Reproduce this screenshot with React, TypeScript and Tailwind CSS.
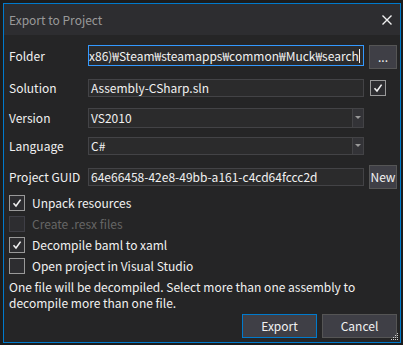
import React from 'react';

const font = { fontFamily: '"Noto Sans CJK KR", "Noto Sans", sans-serif' };

const Check: React.FC<{ checked?: boolean; disabled?: boolean }> = ({ checked, disabled }) => (
  <div
    className={
      disabled
        ? 'w-4 h-4 shrink-0 border border-[#3f3f46] bg-[#2d2d30]'
        : 'w-4 h-4 shrink-0 border border-[#999999] bg-[#2d2d30] flex items-center justify-center'
    }
  >
    {checked && (
      <svg width="10" height="10" viewBox="0 0 10 10">
        <path d="M1.5 5.2 L4 8 L8.6 1.6" fill="none" stroke="#f1f1f1" strokeWidth="1.6" />
      </svg>
    )}
  </div>
);

const Combo: React.FC<{ value: string; h: string }> = ({ value, h }) => (
  <div className={`flex w-[276px] ${h} border border-[#434346] bg-[#2b2b2c]`}>
    <div className="flex-1 flex items-center pl-[2px] text-[#f1f1f1]">{value}</div>
    <div className="w-[11px] border-l border-[#434346] bg-[#333337] flex items-center justify-center">
      <svg width="6" height="4" viewBox="0 0 6 4">
        <path d="M0 0 H6 L3 3 Z" fill="#999999" />
      </svg>
    </div>
  </div>
);

export default function App() {
  return (
    <div className="w-[403px] h-[345px] bg-[#1c1c1c] p-[3px] text-[12px] leading-[16px]" style={font}>
      <div className="w-[398px] h-[340px] border border-[#007acc] bg-[#252526] flex flex-col">
        {/* Title */}
        <div className="h-[31px] shrink-0 bg-[#2d2d30] flex items-center justify-between pl-[5px] pr-[8px]">
          <span className="text-[12px] text-[#999999]">Export to Project</span>
          <svg width="10" height="10" viewBox="0 0 10 10">
            <path d="M0.5 0.5 L9.5 9.5 M9.5 0.5 L0.5 9.5" stroke="#f1f1f1" strokeWidth="1.4" />
          </svg>
        </div>

        <div className="flex flex-col pl-[5px] pr-[2px] text-[#f1f1f1]">
          {/* Folder */}
          <div className="mt-[10px] h-[24px] flex items-start">
            <div className="w-[79px] h-[21px] flex items-center">Folder</div>
            <div className="w-[276px] h-[21px] border border-[#3399ff] bg-[#2b2b2c] flex items-center overflow-hidden whitespace-nowrap">
              <span className="shrink-0">x86)₩Steam₩steamapps₩common₩Muck₩search</span>
              <span className="shrink-0 w-px h-[14px] bg-[#f1f1f1]" />
            </div>
            <div className="ml-[5px] w-[28px] h-[24px] border border-[#555555] bg-[#3f3f46] flex items-center justify-center">...</div>
          </div>

          {/* Solution */}
          <div className="mt-[10px] h-[18px] flex items-center">
            <div className="w-[79px]">Solution</div>
            <div className="w-[276px] h-[18px] border border-[#434346] bg-[#2b2b2c] flex items-center pl-[2px]">Assembly-CSharp.sln</div>
            <div className="ml-[6px]">
              <Check checked />
            </div>
          </div>

          {/* Version */}
          <div className="mt-[11px] h-[20px] flex items-center">
            <div className="w-[79px]">Version</div>
            <Combo value="VS2010" h="h-[20px]" />
          </div>

          {/* Language */}
          <div className="mt-[9px] h-[18px] flex items-center">
            <div className="w-[79px]">Language</div>
            <Combo value="C#" h="h-[18px]" />
          </div>

          {/* GUID */}
          <div className="mt-[10px] h-[24px] flex items-center">
            <div className="w-[79px]">Project GUID</div>
            <div className="w-[276px] h-[18px] border border-[#434346] bg-[#2b2b2c] flex items-center pl-[2px]">
              64e66458-42e8-49bb-a161-c4cd64fccc2d
            </div>
            <div className="ml-[5px] w-[28px] h-[24px] border border-[#555555] bg-[#3f3f46] flex items-center justify-center">New</div>
          </div>

          {/* Options */}
          <div className="mt-[6px] flex flex-col gap-[5px]">
            <div className="h-[16px] flex items-center gap-[7px]">
              <Check checked />
              <span>Unpack resources</span>
            </div>
            <div className="h-[16px] flex items-center gap-[7px]">
              <Check disabled />
              <span className="text-[#656565]">Create .resx files</span>
            </div>
            <div className="h-[16px] flex items-center gap-[7px]">
              <Check checked />
              <span>Decompile baml to xaml</span>
            </div>
            <div className="h-[16px] flex items-center gap-[7px]">
              <Check />
              <span>Open project in Visual Studio</span>
            </div>
          </div>

          <p className="mt-[5px]">
            One file will be decompiled. Select more than one assembly to
            <br />
            decompile more than one file.
          </p>

          {/* Buttons */}
          <div className="mt-[3px] flex justify-end gap-[5px] pr-[1px] relative">
            <div className="w-[75px] h-[24px] border border-[#007acc] bg-[#3f3f46] flex items-center justify-center">Export</div>
            <div className="w-[75px] h-[24px] border border-[#555555] bg-[#3f3f46] flex items-center justify-center">Cancel</div>
            <svg className="absolute right-[-1px] bottom-[-3px]" width="8" height="8" viewBox="0 0 8 8">
              <g fill="#cccccc">
                <rect x="6" y="0" width="1" height="1" />
                <rect x="4" y="2" width="1" height="1" />
                <rect x="6" y="2" width="1" height="1" />
                <rect x="2" y="4" width="1" height="1" />
                <rect x="4" y="4" width="1" height="1" />
                <rect x="6" y="4" width="1" height="1" />
                <rect x="0" y="6" width="1" height="1" />
                <rect x="2" y="6" width="1" height="1" />
                <rect x="4" y="6" width="1" height="1" />
                <rect x="6" y="6" width="1" height="1" />
              </g>
            </svg>
          </div>
        </div>
      </div>
    </div>
  );
}
